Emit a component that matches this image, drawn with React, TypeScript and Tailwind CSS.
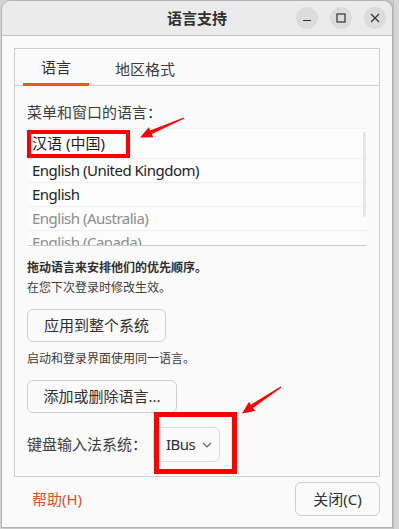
import React from "react";

const F = { fontFamily: '"Noto Sans", "Noto Sans CJK SC", sans-serif' };

function Row({ text, gray, h, tight }: { text: string; gray?: boolean; h: string; tight?: boolean }) {
  return (
    <div className={`${h} shrink-0 border-b border-[#efefef] flex items-center pl-1 text-[15px] ${tight ? "tracking-[-0.5px]" : ""} ${gray ? "text-[#8c8c8c]" : "text-[#1e1e1e]"}`}>
      {text}
    </div>
  );
}

export default function App() {
  return (
    <div className="relative w-[399px] h-[529px] bg-[#d3d3d3] flex overflow-hidden" style={F}>
      <div className="ml-px w-[392px] h-[528px] border border-[#b3b3b3] rounded-t-[10px] bg-[#fafafa] flex flex-col overflow-hidden shadow-[2px_0_3px_rgba(0,0,0,0.15)]">
        {/* title bar */}
        <div className="h-[35px] shrink-0 bg-[#ebebeb] border-b border-[#c2c2c2] relative flex items-center justify-end pr-[6px] gap-[12px]">
          <div className="absolute inset-0 flex items-center justify-center text-[15px] font-bold text-[#2f2f2f]">语言支持</div>
          <div className="relative w-[22px] h-[22px] rounded-full bg-[#dcdcdc] flex items-center justify-center">
            <svg width="10" height="10" viewBox="0 0 10 10"><path d="M1 7.5h8" stroke="#333" strokeWidth="1.2" /></svg>
          </div>
          <div className="relative w-[22px] h-[22px] rounded-full bg-[#dcdcdc] flex items-center justify-center">
            <svg width="10" height="10" viewBox="0 0 10 10"><rect x="1" y="1" width="8" height="8" fill="none" stroke="#333" strokeWidth="1.2" /></svg>
          </div>
          <div className="relative w-[22px] h-[22px] rounded-full bg-[#dcdcdc] flex items-center justify-center">
            <svg width="10" height="10" viewBox="0 0 10 10"><path d="M1 1l8 8M9 1l-8 8" stroke="#333" strokeWidth="1.2" /></svg>
          </div>
        </div>

        {/* body */}
        <div className="px-3 pt-3 flex flex-col">
          <div className="h-[429px] border border-[#cdcdcd] flex flex-col">
            <div className="h-[37px] shrink-0 border-b border-[#cdcdcd] flex pl-2">
              <div className="w-[66px] h-[37px] border-b-[3px] border-[#e95420] flex items-center justify-center pt-[3px] text-[15px] text-[#2f2f2f]">语言</div>
              <div className="ml-[6px] w-[100px] h-[36px] flex items-center justify-center pt-[4px] text-[15px] text-[#3d3d3d]">地区格式</div>
            </div>
            <div className="px-3 flex flex-col text-[#3d3d3d]">
              <div className="mt-[16px] h-[20px] leading-[20px] text-[15px]">菜单和窗口的语言：</div>
              <div className="mt-[6px] ml-px h-[118px] border-t border-[#f0f0f0] border-b border-b-[#cacaca] relative overflow-hidden flex flex-col bg-[#fcfcfc]">
                <Row text="汉语 (中国)" h="h-[30px]" />
                <Row text="English (United Kingdom)" h="h-[24px]" tight />
                <Row text="English" h="h-[24px]" tight />
                <Row text="English (Australia)" gray h="h-[24px]" tight />
                <Row text="English (Canada)" gray h="h-[24px]" tight />
                <div className="absolute right-[1px] top-[3px] w-[3px] h-[85px] rounded-full bg-[#e6e6e6]" />
              </div>
              <div className="mt-3 h-[20px] leading-[20px] text-[12px] font-bold text-[#2f2f2f]">拖动语言来安排他们的优先顺序。</div>
              <div className="h-[20px] leading-[20px] text-[12px]">在您下次登录时修改生效。</div>
              <div className="mt-[11px] w-[139px] h-[33px] border border-[#cfcfcf] rounded-[6px] flex items-center justify-center text-[15px] text-[#2f2f2f]">应用到整个系统</div>
              <div className="mt-[7px] h-[20px] leading-[20px] text-[12px]">启动和登录界面使用同一语言。</div>
              <div className="mt-[11px] w-[150px] h-[33px] border border-[#cfcfcf] rounded-[6px] flex items-center justify-center text-[15px] text-[#2f2f2f]">添加或删除语言...</div>
              <div className="mt-[14px] flex items-center">
                <div className="w-[126px] text-[15px]">键盘输入法系统：</div>
                <div className="w-[67px] h-[35px] border border-[#d9d9d9] rounded-[6px] flex items-center pl-[12px] text-[15px] tracking-[-0.5px] text-[#2f2f2f]">
                  IBus
                  <svg className="ml-[7px]" width="10" height="6" viewBox="0 0 10 6"><path d="M1 1l4 4 4-4" fill="none" stroke="#666" strokeWidth="1.2" /></svg>
                </div>
              </div>
            </div>
          </div>
          <div className="mt-[5px] flex items-center justify-between">
            <div className="pl-[18px] text-[15px] text-[#d9512a]">帮助(H)</div>
            <div className="w-[85px] h-[34px] border border-[#cfcfcf] rounded-[6px] flex items-center justify-center text-[15px] text-[#2f2f2f]">关闭(C)</div>
          </div>
        </div>
      </div>
      <div className="flex-1 bg-[#d6d6d6] border-l border-[#bdbdbd]" />

      {/* annotations */}
      <div className="absolute left-[27px] top-[130px] w-[103px] h-[28px] border-[4px] border-[#ff0000]" />
      <div className="absolute left-[154px] top-[412px] w-[83px] h-[62px] border-[5px] border-[#ff0000]" />
      <svg className="absolute left-0 top-0" width="399" height="529" viewBox="0 0 399 529">
        <polygon points="184.3,118.6 151.8,134.0 153.2,137.2 140,137.5 148.8,127.2 150.2,130.4 183.8,117.4" fill="#ff0000" />
        <polygon points="281.4,387.5 253.1,408.0 255.0,410.9 242,413.5 249.0,401.8 250.9,404.7 280.6,386.5" fill="#ff0000" />
      </svg>
    </div>
  );
}
